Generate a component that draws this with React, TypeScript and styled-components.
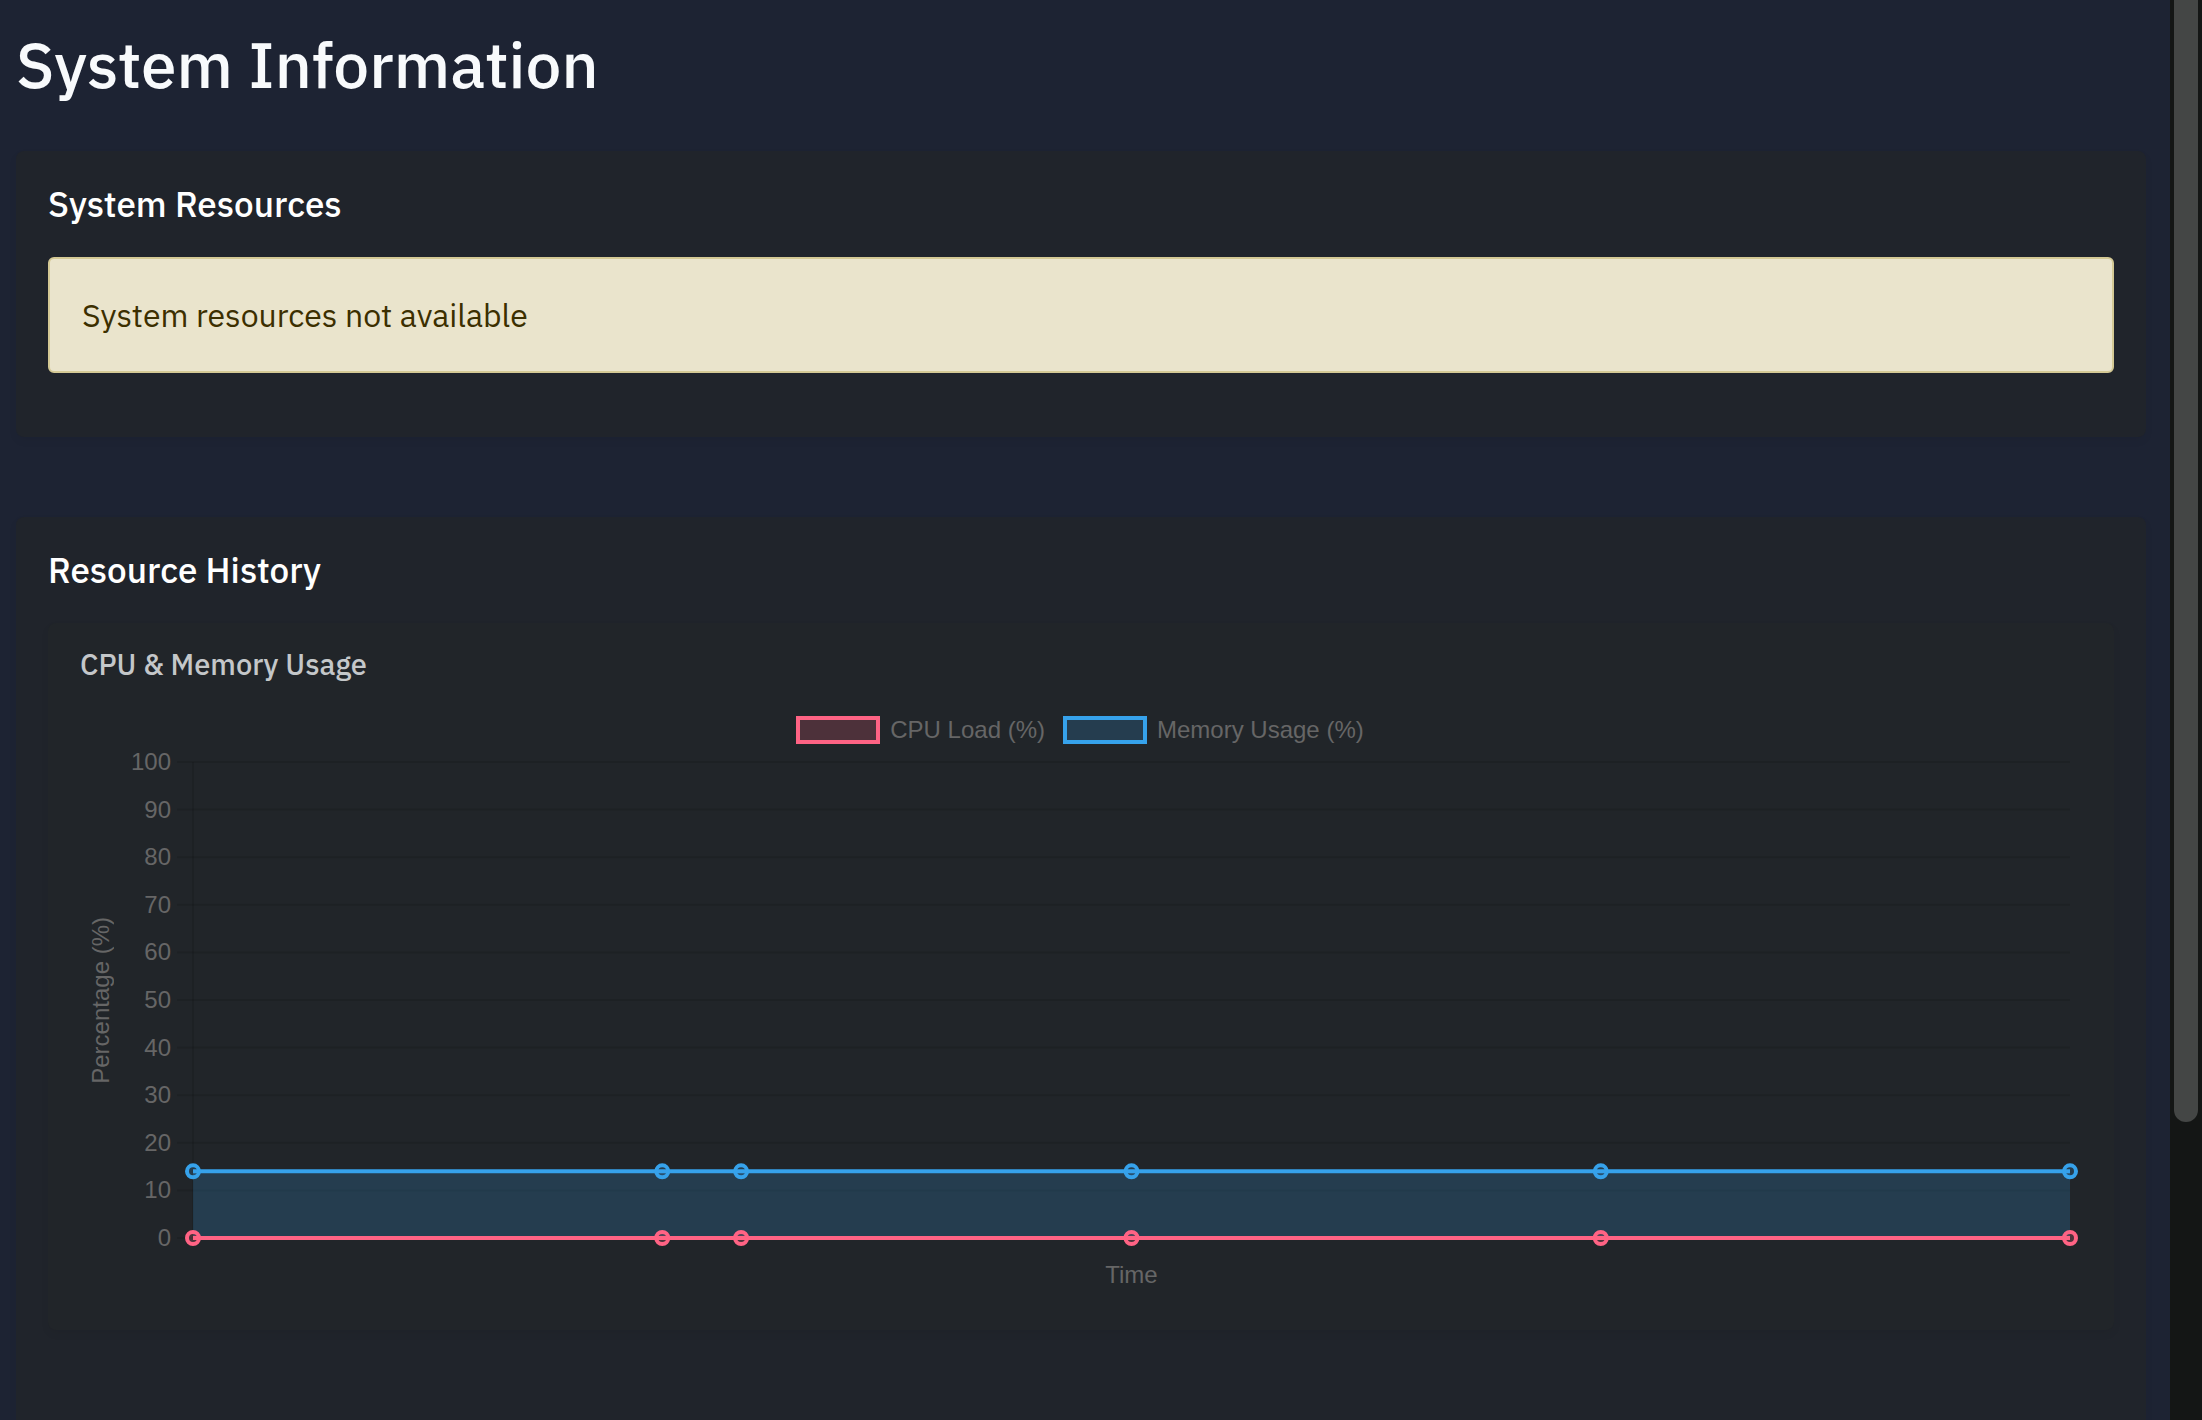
import React from "react";
import styled, { createGlobalStyle } from "styled-components";

const GlobalStyle = createGlobalStyle`
  * { box-sizing: border-box; }
  body {
    margin: 0;
    background: #1d2333;
    color: #f8fafc;
    font-family: "IBM Plex Sans", "Noto Sans", sans-serif;
    font-size: 32px;
    line-height: 48px;
  }
  h1, h2, h3, p { margin: 0; font-weight: 500; }
`;

const Shell = styled.div`
  display: grid;
  grid-template-columns: minmax(0, 1fr) 32px;
  height: 100vh;
  overflow: hidden;
`;

const Page = styled.main`
  padding: 26px 24px 0 16px;
  overflow: hidden;
`;

const Track = styled.div`
  padding: 0 4px;
  background: #141615;
`;

const Thumb = styled.div`
  height: 79%;
  border-radius: 0 0 12px 12px;
  background: #444645;
`;

const Title = styled.h1`
  margin-bottom: 49px;
  font-size: 64px;
  line-height: 76px;
`;

const Card = styled.section`
  margin-bottom: 80px;
  padding: 32px;
  border-radius: 8px;
  background: #20242b;
  box-shadow: 0 4px 8px rgba(0, 0, 0, 0.05);
`;

const Heading = styled.h2`
  margin-bottom: 32px;
  color: #fff;
  font-size: 35px;
  line-height: 42px;
`;

const Alert = styled.p`
  margin-bottom: 32px;
  padding: 32px;
  border: 2px solid #d4c995;
  border-radius: 6px;
  background: #eae4cc;
  color: #3c2f00;
  font-weight: 400;
`;

const ChartCard = styled.div`
  margin-bottom: 400px;
  padding: 24px 32px 32px;
  border-radius: 8px;
  background: #212529;
  box-shadow: 0 4px 8px rgba(0, 0, 0, 0.05);
`;

const ChartHeading = styled.h3`
  margin-bottom: 35px;
  color: #c4c7c9;
  font-size: 29px;
  line-height: 34px;
`;

const Figure = styled.figure`
  margin: 0;
  color: #666;
  font-family: "Liberation Sans", Arial, sans-serif;
  font-size: 24px;
  line-height: 28px;
`;

const Legend = styled.ul`
  display: flex;
  justify-content: center;
  gap: 18px;
  margin: 0 0 4px;
  padding: 0 2px 0 0;
  list-style: none;
`;

const LegendItem = styled.li`
  display: flex;
  gap: 10px;
`;

const Swatch = styled.span<{ $line: string; $fill: string }>`
  width: 84px;
  height: 28px;
  border: 4px solid ${(p) => p.$line};
  background: ${(p) => p.$fill};
`;

const ChartBody = styled.div`
  display: grid;
  grid-template-columns: 34px 57px minmax(0, 1fr);
  padding-right: 12px;
`;

const AxisTitle = styled.div`
  justify-self: start;
  align-self: center;
  padding-right: 7px;
  writing-mode: vertical-rl;
  transform: rotate(180deg);
`;

const Ticks = styled.div`
  display: flex;
  flex-direction: column;
  justify-content: space-between;
  text-align: right;
`;

const Plot = styled.div`
  padding: 14px 0 14px 22px;
`;

const Drawing = styled.svg`
  display: block;
  width: 100%;
  height: 476px;
  overflow: visible;
`;

const TimeTitle = styled.div`
  grid-column: 3;
  padding: 9px 0 9px 22px;
  text-align: center;
`;

const CPU = { label: "CPU Load (%)", line: "#ff6384", fill: "rgba(255, 99, 132, 0.2)", value: 0 };
const MEMORY = { label: "Memory Usage (%)", line: "#36a2eb", fill: "rgba(54, 162, 235, 0.2)", value: 14 };
const TICKS = [100, 90, 80, 70, 60, 50, 40, 30, 20, 10, 0];
const TIMES = [0, 25, 29.2, 50, 75, 100];

const yOf = (value: number) => `${100 - value}%`;

function Series({ series }: { series: typeof CPU }) {
  const y = yOf(series.value);
  return (
    <g>
      <rect x="0" y={y} width="100%" height={`${series.value}%`} fill={series.fill} />
      <line x1="0" x2="100%" y1={y} y2={y} stroke={series.line} strokeWidth="4" />
      {TIMES.map((t) => (
        <circle key={t} cx={`${t}%`} cy={y} r="6" fill={series.fill} stroke={series.line} strokeWidth="4" />
      ))}
    </g>
  );
}

function UsageChart() {
  return (
    <Figure>
      <Legend>
        {[CPU, MEMORY].map((s) => (
          <LegendItem key={s.label}>
            <Swatch $line={s.line} $fill={s.fill} />
            {s.label}
          </LegendItem>
        ))}
      </Legend>
      <ChartBody>
        <AxisTitle>Percentage (%)</AxisTitle>
        <Ticks>
          {TICKS.map((t) => (
            <span key={t}>{t}</span>
          ))}
        </Ticks>
        <Plot>
          <Drawing role="img" aria-label="CPU and memory usage over time">
            <g stroke="rgba(0, 0, 0, 0.1)" strokeWidth="2">
              {TICKS.map((t) => (
                <React.Fragment key={t}>
                  <line x1="-16" x2="0" y1={yOf(t)} y2={yOf(t)} />
                  <line x1="0" x2="100%" y1={yOf(t)} y2={yOf(t)} />
                </React.Fragment>
              ))}
              <line x1="0" x2="0" y1="0" y2="100%" />
            </g>
            <Series series={MEMORY} />
            <Series series={CPU} />
          </Drawing>
        </Plot>
        <TimeTitle>Time</TimeTitle>
      </ChartBody>
    </Figure>
  );
}

export default function App() {
  return (
    <>
      <GlobalStyle />
      <Shell>
        <Page>
          <Title>System Information</Title>
          <Card>
            <Heading>System Resources</Heading>
            <Alert role="alert">System resources not available</Alert>
          </Card>
          <Card>
            <Heading>Resource History</Heading>
            <ChartCard>
              <ChartHeading>CPU &amp; Memory Usage</ChartHeading>
              <UsageChart />
            </ChartCard>
          </Card>
        </Page>
        <Track>
          <Thumb />
        </Track>
      </Shell>
    </>
  );
}
